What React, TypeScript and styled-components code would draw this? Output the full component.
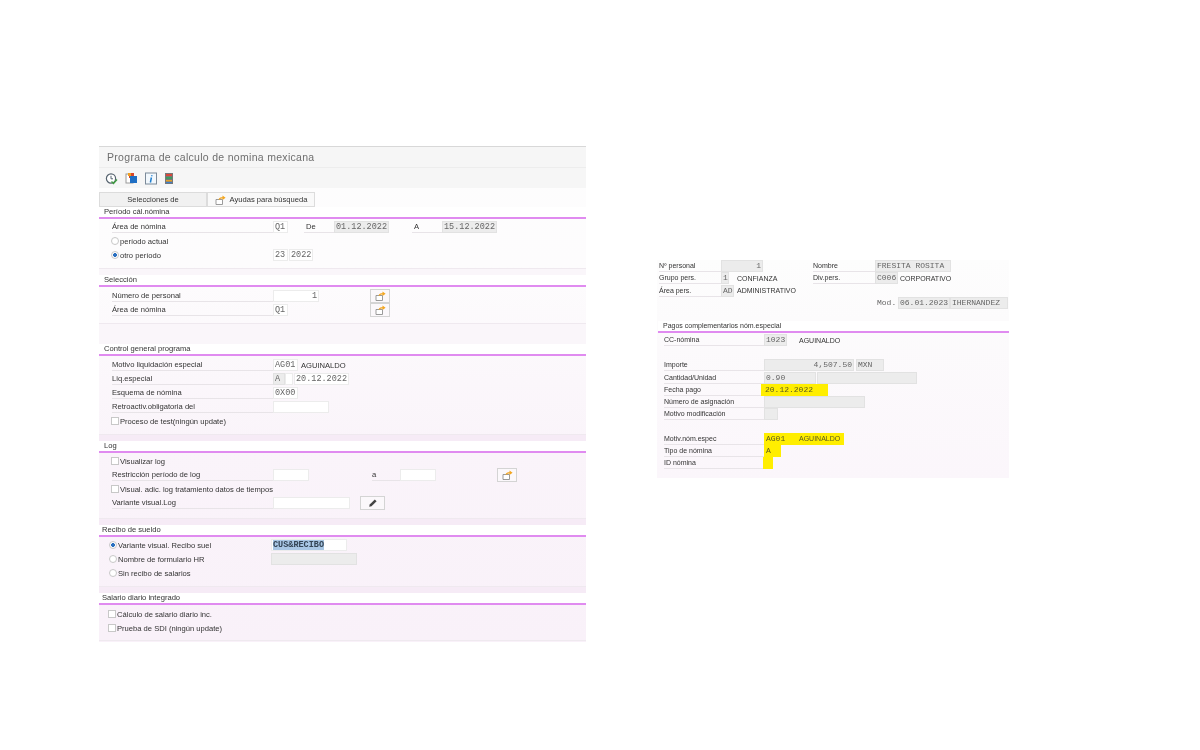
import React from 'react';
import styled, { createGlobalStyle } from 'styled-components';

const GlobalStyle = createGlobalStyle`
  html, body {
    margin: 0;
    padding: 0;
    background: #fff;
    overflow: hidden;
  }
`;

const Page = styled.div`
  width: 1200px;
  height: 750px;
  display: flex;
  align-items: flex-start;
  font-family: "Liberation Sans", Arial, sans-serif;
  font-size: 7.6px;
  color: #333;
`;

const LeftPanel = styled.div`
  width: 487px;
  height: 496px;
  margin: 146px 0 0 99px;
  border-top: 1px solid #d8d8d8;
  box-sizing: border-box;
  background: linear-gradient(#fdfdfd 0, #fdfcfd 120px, #faf4fa 300px, #f9f1f9 100%);
  filter: blur(0.5px);
`;

const TitleBar = styled.div`
  height: 20px;
  background: #f6f6f6;
  border-bottom: 1px solid #ededed;
  padding-left: 8px;
  font-size: 10.5px;
  line-height: 21px;
  color: #6e6e6e;
  letter-spacing: 0.3px;
`;

const Toolbar = styled.div`
  height: 20px;
  background: #f6f6f6;
  display: flex;
  align-items: center;
  gap: 7px;
  padding-left: 6px;
`;

const Tabs = styled.div`
  display: flex;
  margin-top: 4px;
  height: 15px;
`;

const Tab = styled.div<{ $active?: boolean }>`
  width: 108px;
  box-sizing: border-box;
  display: flex;
  align-items: center;
  justify-content: center;
  gap: 4px;
  background: ${p => (p.$active ? '#f1f1f1' : '#f9f9f9')};
  border: 1px solid #dcdcdc;
`;

const Gap = styled.div<{ $h: number; $tint?: boolean }>`
  height: ${p => p.$h}px;
  background: ${p => (p.$tint ? '#f6ebf6' : '#faf6fa')};
`;

const Section = styled.section<{ $h: number }>`
  height: ${p => p.$h}px;
  box-sizing: border-box;
  border-bottom: 1px solid #efe9ef;
`;

const SectionHead = styled.div<{ $indent?: number }>`
  height: 10px;
  line-height: 10px;
  padding-left: ${p => p.$indent ?? 5}px;
  background: #fff;
  border-bottom: 2px solid #e08bf0;
`;

const Rows = styled.div<{ $top: number }>`
  padding-top: ${p => p.$top}px;
`;

const Row = styled.div<{ $indent?: number }>`
  height: 14px;
  display: flex;
  align-items: center;
  padding-left: ${p => p.$indent ?? 13}px;
`;

const Label = styled.div<{ $w: number; $ml?: number; $pad?: number }>`
  width: ${p => p.$w}px;
  margin-left: ${p => p.$ml ?? 0}px;
  padding-left: ${p => p.$pad ?? 0}px;
  height: 12px;
  line-height: 12px;
  box-sizing: border-box;
  border-bottom: 1px solid #e8e4e8;
  flex: none;
`;

type Tone = 'grey' | 'white' | 'none';

const fieldBg: Record<Tone, string> = { grey: '#ececec', white: '#fff', none: 'transparent' };
const fieldLine: Record<Tone, string> = { grey: '#e2e2e2', white: '#ececec', none: 'transparent' };

const Field = styled.div<{ $w: number; $ml?: number; $tone?: Tone; $right?: boolean }>`
  width: ${p => p.$w}px;
  height: 12px;
  margin-left: ${p => p.$ml ?? 0}px;
  padding: 0 1px;
  box-sizing: border-box;
  flex: none;
  font-family: "Liberation Mono", "Courier New", monospace;
  font-size: 8.5px;
  line-height: 10px;
  text-align: ${p => (p.$right ? 'right' : 'left')};
  color: #666;
  background: ${p => fieldBg[p.$tone ?? 'white']};
  border: 1px solid ${p => fieldLine[p.$tone ?? 'white']};
  white-space: nowrap;
  overflow: hidden;
`;

const Selected = styled.span`
  background: #a8c6e4;
  color: #345;
  font-weight: bold;
`;

const Plain = styled.div<{ $ml?: number; $w?: number }>`
  margin-left: ${p => p.$ml ?? 0}px;
  width: ${p => (p.$w ? `${p.$w}px` : 'auto')};
  flex: none;
  white-space: nowrap;
`;

const IconButton = styled.div<{ $w?: number; $ml: number }>`
  width: ${p => p.$w ?? 20}px;
  height: 14px;
  margin-left: ${p => p.$ml}px;
  box-sizing: border-box;
  flex: none;
  display: flex;
  align-items: center;
  justify-content: center;
  background: #fbf8fb;
  border: 1px solid #d4d4d4;
`;

const Radio = styled.span<{ $on?: boolean }>`
  width: 8px;
  height: 8px;
  margin-right: 1px;
  box-sizing: border-box;
  flex: none;
  border-radius: 50%;
  background: ${p => (p.$on ? 'radial-gradient(circle, #2a6fc0 0 1.6px, #fff 2.2px)' : '#fff')};
  border: 1px solid #c8c8c8;
`;

const Check = styled.span`
  width: 8px;
  height: 8px;
  margin-right: 1px;
  box-sizing: border-box;
  flex: none;
  background: #fff;
  border: 1px solid #c8c8c8;
`;

const RightPanel = styled.div`
  width: 352px;
  height: 218px;
  margin: 260px 0 0 71px;
  font-size: 7px;
  background: linear-gradient(#fdfdfd, #fcfbfc 60px, #fbf6fb 100%);
  filter: blur(0.5px);

  ${Field} {
    font-size: 8px;
  }
`;

const InfoBlock = styled.div`
  height: 61px;
`;

const SmallRow = styled.div<{ $indent?: number }>`
  height: 12.25px;
  display: flex;
  align-items: center;
  padding-left: ${p => p.$indent ?? 2}px;
`;

const PaySection = styled.div`
  margin-left: 1px;
`;

const PayHead = styled.div`
  height: 10px;
  line-height: 10px;
  padding-left: 5px;
  background: #fff;
  border-bottom: 2px solid #e08bf0;
`;

const Blank = styled.div<{ $h: number }>`
  height: ${p => p.$h}px;
`;

const Mark = styled.div<{ $w: number; $ml?: number; $pad?: number }>`
  width: ${p => p.$w}px;
  height: 12px;
  margin-left: ${p => p.$ml ?? 0}px;
  padding-left: ${p => p.$pad ?? 0}px;
  box-sizing: border-box;
  line-height: 12px;
  flex: none;
  background: #ffee00;
  color: #5a5a20;
  white-space: nowrap;
`;

const MarkMono = styled(Mark)`
  font-family: "Liberation Mono", "Courier New", monospace;
  font-size: 8px;
`;

const ClockIcon = () => (
  <svg width="13" height="13" viewBox="0 0 13 13">
    <circle cx="6" cy="6.5" r="4.6" fill="#fff" stroke="#55626e" strokeWidth="1.2" />
    <path d="M6 3.8v3h2" fill="none" stroke="#55626e" />
    <path d="M6.5 9.5l2 2 3.5-4" fill="none" stroke="#3f9b3f" strokeWidth="1.4" />
  </svg>
);

const CopyIcon = () => (
  <svg width="13" height="13" viewBox="0 0 13 13">
    <rect x="1" y="2" width="7" height="9" fill="#fff" stroke="#9a9a9a" />
    <rect x="4" y="1" width="5" height="5" fill="#d9472b" />
    <rect x="5" y="4" width="7" height="7" fill="#1f6fc4" />
    <rect x="3" y="1" width="3" height="3" fill="#f0a020" />
  </svg>
);

const InfoIcon = () => (
  <svg width="12" height="13" viewBox="0 0 12 13">
    <rect x="0.5" y="1" width="11" height="11" fill="#f2f8fd" stroke="#7b8a99" />
    <path d="M6.8 3.2v1M6.4 5.5L5.4 10.5" stroke="#1f7fd0" strokeWidth="1.5" fill="none" />
  </svg>
);

const ListIcon = () => (
  <svg width="10" height="13" viewBox="0 0 10 13">
    <rect x="1" y="1" width="8" height="11" fill="#777" />
    <rect x="2" y="2" width="6" height="2" fill="#d8473a" />
    <rect x="2" y="5" width="6" height="2" fill="#3f9b5f" />
    <rect x="2" y="8" width="6" height="1.5" fill="#e0a030" />
    <rect x="2" y="10" width="6" height="1.2" fill="#3f7fc8" />
  </svg>
);

const MultiSelectIcon = () => (
  <svg width="11" height="10" viewBox="0 0 11 10">
    <path d="M1 4.5h6.5v5H1z" fill="#fff" stroke="#909090" strokeWidth="0.9" />
    <path d="M3.5 4.5C4 2.8 5.5 2.2 7.5 2.2V0.6L10.6 2.8 7.5 5V3.5C6 3.5 5 3.9 4.6 4.8z" fill="#f2a51f" />
  </svg>
);

const PencilIcon = () => (
  <svg width="10" height="10" viewBox="0 0 10 10">
    <path d="M1.2 8.8l.5-2.3L6.8 1.4l1.8 1.8L3.5 8.3z" fill="#444" />
  </svg>
);

export default function App() {
  return (
    <Page>
      <GlobalStyle />
      <LeftPanel>
        <TitleBar>Programa de calculo de nomina mexicana</TitleBar>
        <Toolbar>
          <ClockIcon />
          <CopyIcon />
          <InfoIcon />
          <ListIcon />
        </Toolbar>
        <Tabs>
          <Tab $active>Selecciones de</Tab>
          <Tab>
            <MultiSelectIcon />
            Ayudas para búsqueda
          </Tab>
        </Tabs>

        <Section $h={62}>
          <SectionHead>Período cál.nómina</SectionHead>
          <Rows $top={1}>
            <Row>
              <Label $w={161}>Área de nómina</Label>
              <Field $w={15}>Q1</Field>
              <Label $w={30} $ml={16} $pad={2}>De</Label>
              <Field $w={55} $tone="grey">01.12.2022</Field>
              <Label $w={30} $ml={23} $pad={2}>A</Label>
              <Field $w={55} $tone="grey">15.12.2022</Field>
            </Row>
            <Row $indent={12}>
              <Radio />
              <Plain>período actual</Plain>
            </Row>
            <Row $indent={12}>
              <Radio $on />
              <Plain $w={153}>otro período</Plain>
              <Field $w={15}>23</Field>
              <Field $w={24} $ml={1}>2022</Field>
            </Row>
          </Rows>
        </Section>

        <Gap $h={6} />

        <Section $h={49}>
          <SectionHead>Selección</SectionHead>
          <Rows $top={2}>
            <Row>
              <Label $w={161}>Número de personal</Label>
              <Field $w={46} $right>1</Field>
              <IconButton $ml={51}><MultiSelectIcon /></IconButton>
            </Row>
            <Row>
              <Label $w={161}>Área de nómina</Label>
              <Field $w={15}>Q1</Field>
              <IconButton $ml={82}><MultiSelectIcon /></IconButton>
            </Row>
          </Rows>
        </Section>

        <Gap $h={20} />

        <Section $h={91}>
          <SectionHead>Control general programa</SectionHead>
          <Rows $top={2}>
            <Row>
              <Label $w={161}>Motivo liquidación especial</Label>
              <Field $w={25}>AG01</Field>
              <Plain $ml={3}>AGUINALDO</Plain>
            </Row>
            <Row>
              <Label $w={161}>Liq.especial</Label>
              <Field $w={12} $tone="grey">A</Field>
              <Field $w={8} />
              <Field $w={55} $ml={1}>20.12.2022</Field>
            </Row>
            <Row>
              <Label $w={161}>Esquema de nómina</Label>
              <Field $w={25}>0X00</Field>
            </Row>
            <Row>
              <Label $w={161}>Retroactiv.obligatoria del</Label>
              <Field $w={56} />
            </Row>
            <Row $indent={12}>
              <Check />
              <Plain>Proceso de test(ningún update)</Plain>
            </Row>
          </Rows>
        </Section>

        <Gap $h={6} $tint />

        <Section $h={78}>
          <SectionHead>Log</SectionHead>
          <Rows $top={1}>
            <Row $indent={12}>
              <Check />
              <Plain>Visualizar log</Plain>
            </Row>
            <Row>
              <Label $w={161}>Restricción período de log</Label>
              <Field $w={36} />
              <Label $w={28} $ml={63}>a</Label>
              <Field $w={36} />
              <IconButton $ml={61}><MultiSelectIcon /></IconButton>
            </Row>
            <Row $indent={12}>
              <Check />
              <Plain>Visual. adic. log tratamiento datos de tiempos</Plain>
            </Row>
            <Row>
              <Label $w={161}>Variante visual.Log</Label>
              <Field $w={77} />
              <IconButton $w={25} $ml={10}><PencilIcon /></IconButton>
            </Row>
          </Rows>
        </Section>

        <Gap $h={6} $tint />

        <Section $h={62}>
          <SectionHead $indent={3}>Recibo de sueldo</SectionHead>
          <Rows $top={1}>
            <Row $indent={10}>
              <Radio $on />
              <Plain $w={153}>Variante visual. Recibo suel</Plain>
              <Field $w={76}><Selected>CUS&amp;RECIBO</Selected></Field>
            </Row>
            <Row $indent={10}>
              <Radio />
              <Plain $w={153}>Nombre de formulario HR</Plain>
              <Field $w={86} $tone="grey" />
            </Row>
            <Row $indent={10}>
              <Radio />
              <Plain>Sin recibo de salarios</Plain>
            </Row>
          </Rows>
        </Section>

        <Gap $h={6} $tint />

        <Section $h={48}>
          <SectionHead $indent={3}>Salario diario integrado</SectionHead>
          <Rows $top={2}>
            <Row $indent={9}>
              <Check />
              <Plain>Cálculo de salario diario inc.</Plain>
            </Row>
            <Row $indent={9}>
              <Check />
              <Plain>Prueba de SDI (ningún update)</Plain>
            </Row>
          </Rows>
        </Section>
      </LeftPanel>

      <RightPanel>
        <InfoBlock>
          <SmallRow>
            <Label $w={62}>Nº personal</Label>
            <Field $w={42} $tone="grey" $right>1</Field>
            <Label $w={62} $ml={50}>Nombre</Label>
            <Field $w={76} $tone="grey">FRESITA ROSITA</Field>
          </SmallRow>
          <SmallRow>
            <Label $w={62}>Grupo pers.</Label>
            <Field $w={8} $tone="grey">1</Field>
            <Plain $ml={8} $w={76}>CONFIANZA</Plain>
            <Label $w={62}>Div.pers.</Label>
            <Field $w={23} $tone="grey">C006</Field>
            <Plain $ml={2}>CORPORATIVO</Plain>
          </SmallRow>
          <SmallRow>
            <Label $w={62}>Área pers.</Label>
            <Field $w={13} $tone="grey">AD</Field>
            <Plain $ml={3}>ADMINISTRATIVO</Plain>
          </SmallRow>
          <SmallRow $indent={218}>
            <Field $w={23} $tone="none">Mod.</Field>
            <Field $w={52} $tone="grey">06.01.2023</Field>
            <Field $w={58} $tone="grey">IHERNANDEZ</Field>
          </SmallRow>
        </InfoBlock>
        <PaySection>
          <PayHead>Pagos complementarios nóm.especial</PayHead>
          <Blank $h={1} />
          <SmallRow $indent={6}>
            <Label $w={100}>CC-nómina</Label>
            <Field $w={23} $tone="grey">1023</Field>
            <Plain $ml={12}>AGUINALDO</Plain>
          </SmallRow>
          <Blank $h={13} />
          <SmallRow $indent={6}>
            <Label $w={100}>Importe</Label>
            <Field $w={90} $tone="grey" $right>4,507.50</Field>
            <Field $w={28} $tone="grey" $ml={2}>MXN</Field>
          </SmallRow>
          <SmallRow $indent={6}>
            <Label $w={100}>Cantidad/Unidad</Label>
            <Field $w={52} $tone="grey">0.90</Field>
            <Field $w={100} $tone="grey" $ml={1} />
          </SmallRow>
          <SmallRow $indent={6}>
            <Label $w={97}>Fecha pago</Label>
            <MarkMono $w={67} $pad={4}>20.12.2022</MarkMono>
          </SmallRow>
          <SmallRow $indent={6}>
            <Label $w={100}>Número de asignación</Label>
            <Field $w={101} $tone="grey" />
          </SmallRow>
          <SmallRow $indent={6}>
            <Label $w={100}>Motivo modificación</Label>
            <Field $w={14} $tone="grey" />
          </SmallRow>
          <Blank $h={12} />
          <SmallRow $indent={6}>
            <Label $w={100}>Motiv.nóm.espec</Label>
            <MarkMono $w={24} $pad={2}>AG01</MarkMono>
            <Mark $w={56} $pad={11}>AGUINALDO</Mark>
          </SmallRow>
          <SmallRow $indent={6}>
            <Label $w={100}>Tipo de nómina</Label>
            <MarkMono $w={17} $pad={2}>A</MarkMono>
          </SmallRow>
          <SmallRow $indent={6}>
            <Label $w={99}>ID nómina</Label>
            <Mark $w={10} />
          </SmallRow>
        </PaySection>
      </RightPanel>
    </Page>
  );
}
